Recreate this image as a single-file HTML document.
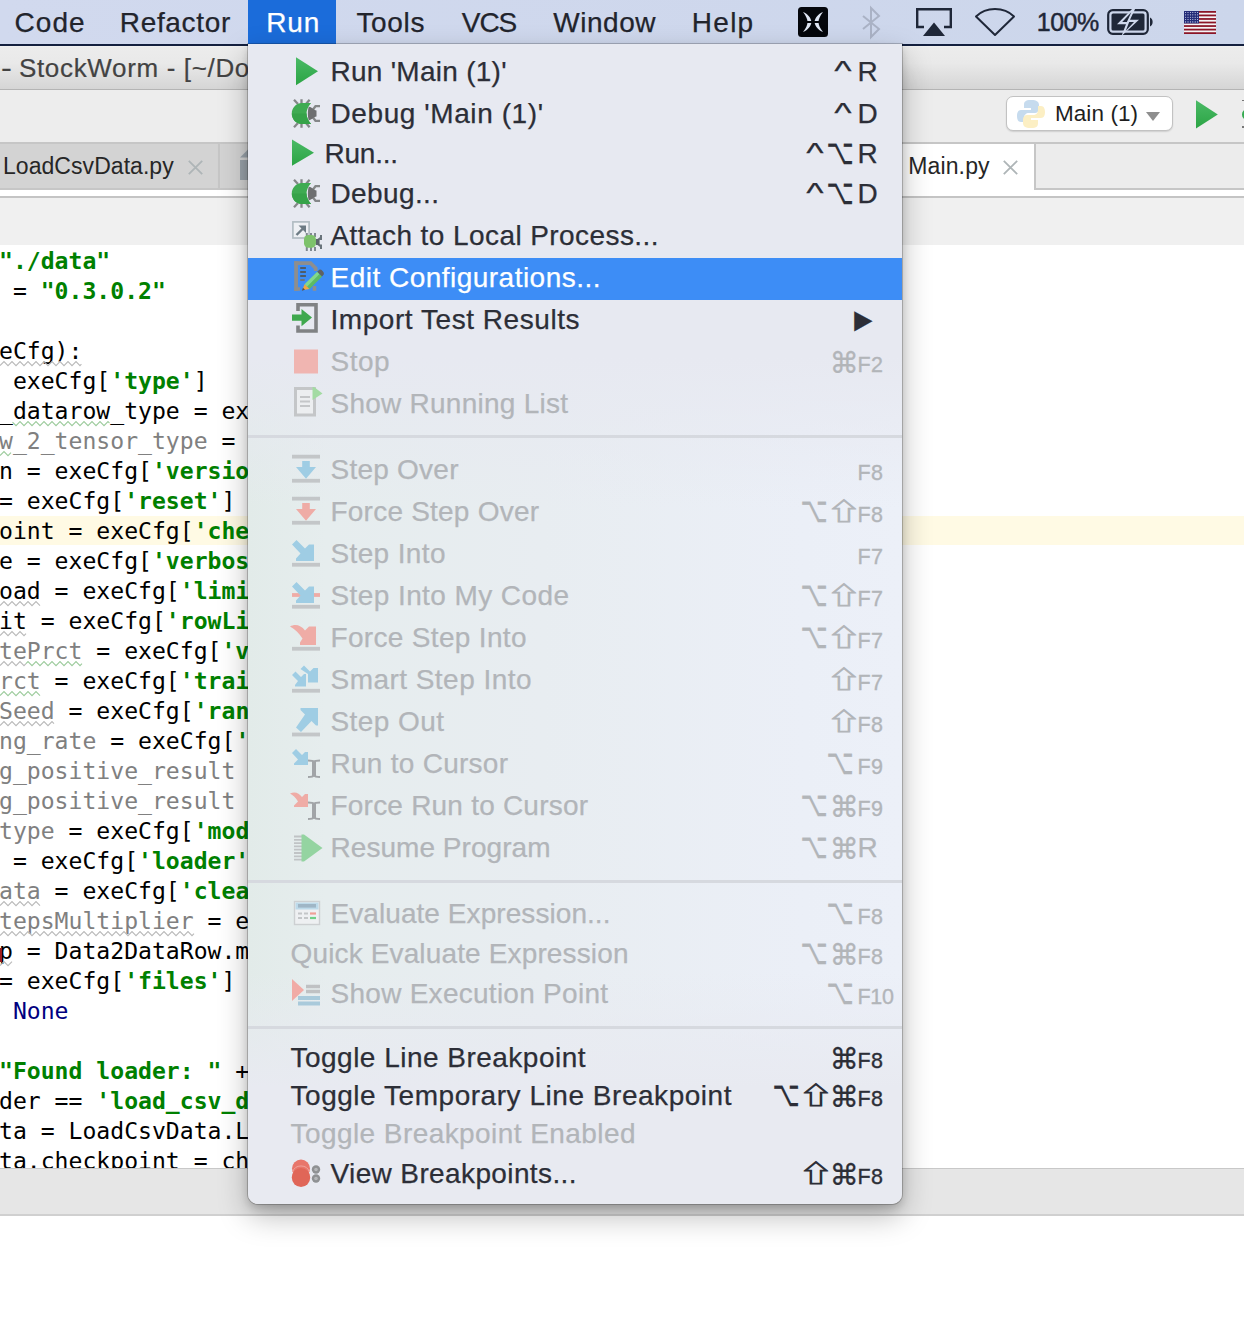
<!DOCTYPE html>
<html><head><meta charset="utf-8"><title>PyCharm Run menu</title>
<style>
html,body{margin:0;padding:0;background:#fff;}
body{width:1244px;height:1324px;position:relative;overflow:hidden;font-family:"Liberation Sans",sans-serif;}
.abs{position:absolute}
#menubar{left:0;top:0;width:1244px;height:44px;background:linear-gradient(90deg,#d1d9ee 0%,#ccd6eb 100%);}
#menubar .t{position:absolute;top:0;height:44px;line-height:45px;margin-left:1px;font-size:28px;color:#22242c;white-space:pre;-webkit-text-stroke:.25px currentColor}
#runhl{position:absolute;left:248px;top:0;width:88px;height:44px;background:#1b6cda}
#mbline{left:0;top:43.8px;width:1244px;height:2.2px;background:#14203f}
#titlebar{left:0;top:46px;width:1244px;height:42.6px;background:linear-gradient(#f4f4f4 0,#ececec 1.2px,#e9e9e9 40%,#d5d5d5 100%);border-bottom:1.3px solid #b4b4b4}
#titlebar span{position:absolute;top:.4px;line-height:45.4px;font-size:26px;color:#434343;white-space:pre;-webkit-text-stroke:.2px currentColor}
#toolbar{left:0;top:89.8px;width:1244px;height:53px;background:#ededed}
#tabbar{left:0;top:141.9px;width:1244px;height:48.1px;background:#ececec;border-top:2px solid #c6c6c6;border-bottom:2px solid #c6c6c6;box-sizing:border-box}
#tabstrip{left:0;top:190px;width:1244px;height:6px;background:#fff}
#crumbs{left:0;top:196px;width:1244px;height:49.6px;background:#f0f0f0;border-top:2px solid #c4c4c4;border-bottom:1.7px solid #c9c9c9;box-sizing:border-box}
#editor{left:0;top:245px;width:1244px;height:923px;background:#fff;overflow:hidden}
#hl{position:absolute;left:0;top:271.3px;width:1244px;height:29px;background:#fffae4}
.cl{position:absolute;left:-1px;height:30px;line-height:30px;font-family:"DejaVu Sans Mono","Liberation Mono",monospace;font-size:23.1px;color:#000;white-space:pre}
.cl b.s{color:#008000;font-weight:bold}
.cl i{font-style:normal}
.cl .g{color:#808080}
.cl .k{color:#000080}
.cl u{text-decoration:none}
#status{left:0;top:1168px;width:1244px;height:48px;background:#e6e6e6;border-top:1px solid #c8c8c8;border-bottom:2px solid #d0d0d0;box-sizing:border-box}
#menu{left:248px;top:44px;width:654px;height:1160px;background:linear-gradient(180deg,rgba(231,233,241,1) 0%,rgba(231,233,241,1) 27%,rgba(231,233,241,0) 40%,rgba(232,234,241,0) 80%,rgba(232,234,241,1) 90%),linear-gradient(90deg,#e2ebe9 0%,#e6edee 12%,#e8edf1 45%,#ebeff7 85%,#ecf0f8 100%);border-radius:0 0 10px 10px;box-shadow:0 0 0 1px rgba(0,0,0,.2),0 12px 30px rgba(0,0,0,.27),0 4px 9px rgba(0,0,0,.16);overflow:hidden}
.mi{position:absolute;left:0;width:654px;height:42px;line-height:42px;font-size:28px;color:#2c2e37;white-space:pre;-webkit-text-stroke:.25px currentColor}
.mi.dis{color:#b2b5b9}
.mi.sel{color:#fff}
.mi.sel::before{content:"";position:absolute;left:0;top:1px;width:100%;height:42px;background:#3d8df6}
.mi .ic{position:absolute;top:5px;height:32px;width:34px}
.mi .ic svg{display:block}
.mi .lb{position:absolute;top:0}
.mi .mods{position:absolute;right:654px;top:0;height:42px;white-space:nowrap;right:calc(654px - 609.5px)}
.mods.shl{margin-right:-2.4px}
.sym{display:inline-block;position:relative;width:28.5px;height:42px;vertical-align:top}
.sym i{position:absolute;left:50%;top:0;height:42px;line-height:42px;font-style:normal;white-space:pre}
.s-cmd{width:25.8px}
.s-cmd i{left:12.25px;font-family:"DejaVu Sans",sans-serif;font-size:29px;transform:translate(-50%,.5px)}
.s-opt{width:28.1px}
.s-opt i{left:10.6px;font-family:"DejaVu Sans",sans-serif;font-size:35.5px;transform:translate(-50%,-2.5px) scaleX(.665)}
.s-shf{width:28.1px}
.s-shf i{left:12.2px;font-family:"Noto Sans CJK JP","DejaVu Sans",sans-serif;font-size:24px;-webkit-text-stroke:.8px currentColor;transform:translate(-50%,-2px) scaleX(1.43)}
.s-ctl{width:28.5px}
.s-ctl i{left:14.25px;font-family:"Liberation Sans",sans-serif;font-size:28px;transform:translate(-50%,-1px) scaleX(1.32)}
.lk{position:absolute;left:609.5px;top:0}
.fk{position:absolute;left:609.5px;top:2.5px;font-size:21.5px;letter-spacing:.4px;-webkit-text-stroke:.35px currentColor}
.arr{position:absolute;left:606.3px;top:0;font-family:"DejaVu Sans",sans-serif;font-size:23.5px;transform:scaleY(1.1);transform-origin:50% 60%}
.sep{position:absolute;left:0;width:654px;height:3px;background:#d6d9df}
.tab{position:absolute;top:-.9px;height:46px;line-height:46px;font-size:23px;color:#262626;white-space:pre}
</style></head><body>
<svg width="0" height="0" style="position:absolute"><defs><linearGradient id="gg" x1="0" y1="0" x2="0" y2="1"><stop offset="0" stop-color="#4aba66"/><stop offset="1" stop-color="#2ba444"/></linearGradient></defs></svg>
<div id="titlebar" class="abs"><span style="left:.5px;transform:scaleX(1.25);transform-origin:0 50%">-</span><span style="left:19.00px;letter-spacing:0.654px">StockWorm - [~/Documents/StockWorm] - .../Main.py - PyCharm</span></div>
<div id="toolbar" class="abs">
  <div class="abs" style="left:1005.6px;top:6.4px;width:167px;height:35.2px;box-sizing:border-box;background:#fff;border:1.2px solid #c2c2c2;border-radius:7px;box-shadow:0 1px 1.5px rgba(0,0,0,.13)"></div>
  <span class="abs" style="left:1016px;top:9.5px"><svg width="30" height="30" viewBox="0 0 30 30" style="overflow:visible" >
<path d="M15 1c-6 0-7 2-7 5v3h7v2H5c-3 0-4 3-4 6s1 6 4 6h3v-4c0-3 2-5 5-5h6c2 0 4-2 4-4V6c0-3-2-5-8-5z" fill="#c6dbee"/>
<path d="M15 29c6 0 7-2 7-5v-3h-7v-2h10c3 0 4-3 4-6s-1-6-4-6h-3v4c0 3-2 5-5 5h-6c-2 0-4 2-4 4v4c0 3 2 5 8 5z" fill="#fcefc4"/>
</svg></span>
  <span class="abs" style="left:1054.90px;letter-spacing:0.096px;top:6.2px;line-height:36.8px;font-size:22.5px;color:#1e1e1e;white-space:pre">Main (1)</span>
  <span class="abs" style="left:1145.8px;top:22px;width:0;height:0;border-left:7.5px solid transparent;border-right:7.5px solid transparent;border-top:9.2px solid #8e8e8e"></span>
  <span class="abs" style="left:1195px;top:9.8px"><svg width="24" height="29" viewBox="0 0 24 29" style="overflow:visible" ><path d="M1 .3 L22.8 14.4 L1 28.600 Z" fill="url(#gg)"/></svg></span>
  <span class="abs" style="left:1241.6px;top:18.8px;width:8px;height:11.400px;border-radius:6px 0 0 6px;background:#35ab50"></span><span class="abs" style="left:1242px;top:10px;width:2px;height:1.600px;background:#777"></span><span class="abs" style="left:1242px;top:36.400px;width:2px;height:1.600px;background:#777"></span>
</div>
<div id="tabbar" class="abs">
  <div class="abs" style="left:0;top:0;width:896px;height:44.1px;background:#d3d3d3"></div>
  <span class="tab" style="left:3.00px;letter-spacing:0.050px">LoadCsvData.py</span>
  <span class="abs" style="left:187.5px;top:16.3px"><svg width="15" height="15" viewBox="0 0 15 15" style="overflow:visible" ><path d="M.8 .8 L14.2 14.2 M14.2 .8 L.8 14.2" stroke="#aeb5b7" stroke-width="1.8" fill="none"/></svg></span>
  <div class="abs" style="left:218.3px;top:0;width:1.5px;height:44.1px;background:#c6c6c6"></div>
  <span class="abs" style="left:240px;top:4.2px"><svg width="12" height="32" viewBox="0 0 12 32" style="overflow:visible" ><path d="M0 9.500 L8 1.500 H12 V9.500 Z" fill="#9ba4ac"/><path d="M0 12 H12 V32 H0 Z" fill="#9ba4ac"/></svg></span>
  <div class="abs" style="left:896px;top:0;width:138px;height:46.1px;background:#fff;border-right:2px solid #c6c6c6"></div><div class="abs" style="left:896px;top:44px;width:138.1px;height:8px;background:#fff"></div>
  <span class="tab" style="left:908.20px;letter-spacing:0.142px">Main.py</span>
  <span class="abs" style="left:1003.3px;top:16.3px"><svg width="15" height="15" viewBox="0 0 15 15" style="overflow:visible" ><path d="M.8 .8 L14.2 14.2 M14.2 .8 L.8 14.2" stroke="#aeb5b7" stroke-width="1.8" fill="none"/></svg></span>
</div>
<div id="tabstrip" class="abs"></div>
<div id="crumbs" class="abs"></div>
<div id="editor" class="abs"><div id="hl"></div>
<div class="cl" style="top:1px"><b class="s">"./data"</b></div>
<div class="cl" style="top:31px"> = <b class="s">"0.3.0.2"</b></div>
<div class="cl" style="top:91px"><u class="w">eCfg):</u></div>
<div class="cl" style="top:121px"> exeCfg[<b class="s">'type'</b>]</div>
<div class="cl" style="top:151px"><u class="w">_datarow</u>_type = ex</div>
<div class="cl" style="top:181px"><u class="w g">w_2_tensor_type</u><i class="g"> </i>= </div>
<div class="cl" style="top:211px">n = exeCfg[<b class="s">'versio</b></div>
<div class="cl" style="top:241px">= exeCfg[<b class="s">'reset'</b>]</div>
<div class="cl" style="top:271px">oint = exeCfg[<b class="s">'che</b></div>
<div class="cl" style="top:301px">e = exeCfg[<b class="s">'verbos</b></div>
<div class="cl" style="top:331px"><u class="w">oad</u> = exeCfg[<b class="s">'limi</b></div>
<div class="cl" style="top:361px"><u class="w">it</u> = exeCfg[<b class="s">'rowLi</b></div>
<div class="cl" style="top:391px"><u class="w g">tePrct</u> = exeCfg[<b class="s">'v</b></div>
<div class="cl" style="top:421px"><u class="w g">rct</u> = exeCfg[<b class="s">'trai</b></div>
<div class="cl" style="top:451px"><u class="w g">Seed</u> = exeCfg[<b class="s">'ran</b></div>
<div class="cl" style="top:481px"><i class="g">ng_rate</i> = exeCfg[<b class="s">'</b></div>
<div class="cl" style="top:511px"><i class="g">g_positive_result</i> </div>
<div class="cl" style="top:541px"><i class="g">g_positive_result</i> </div>
<div class="cl" style="top:571px"><i class="g">type</i> = exeCfg[<b class="s">'mod</b></div>
<div class="cl" style="top:601px"> = exeCfg[<b class="s">'loader'</b></div>
<div class="cl" style="top:631px"><u class="w g">ata</u> = exeCfg[<b class="s">'clea</b></div>
<div class="cl" style="top:661px"><u class="w g">tepsMultiplier</u> = e</div>
<div class="cl" style="top:691px">p = Data2DataRow.m</div>
<div class="cl" style="top:721px">= exeCfg[<b class="s">'files'</b>]</div>
<div class="cl" style="top:751px"> <i class="k">None</i></div>
<div class="cl" style="top:811px"><b class="s">"Found loader: "</b> +</div>
<div class="cl" style="top:841px">der == <b class="s">'load_csv_d</b></div>
<div class="cl" style="top:871px">ta = LoadCsvData.L</div>
<div class="cl" style="top:901px">ta.checkpoint = ch</div>
<svg class="abs" style="left:0;top:0;overflow:visible" width="260" height="923" viewBox="0 0 260 923" fill="none" stroke-width="1.1"><polyline points="0.0,120.6 4.0,116.6 8.0,120.6 12.0,116.6 16.0,120.6 20.0,116.6 24.0,120.6 28.0,116.6 32.0,120.6 36.0,116.6 40.0,120.6 44.0,116.6 48.0,120.6 52.0,116.6 56.0,120.6 60.0,116.6 64.0,120.6 68.0,116.6 72.0,120.6 76.0,116.6 80.0,120.6 81.4,119.2" stroke="#b9b9b9"/><polyline points="12.5,177.1 16.0,180.6 20.0,176.6 24.0,180.6 28.0,176.6 32.0,180.6 36.0,176.6 40.0,180.6 44.0,176.6 48.0,180.6 52.0,176.6 56.0,180.6 60.0,176.6 64.0,180.6 68.0,176.6 72.0,180.6 76.0,176.6 80.0,180.6 84.0,176.6 88.0,180.6 92.0,176.6 96.0,180.6 100.0,176.6 104.0,180.6 108.0,176.6 109.5,178.1" stroke="#9ccb9c"/><polyline points="0.0,210.6 4.0,206.6 8.0,210.6 11.0,207.6" stroke="#9ccb9c"/><polyline points="0.0,360.6 4.0,356.6 8.0,360.6 12.0,356.6 16.0,360.6 20.0,356.6 24.0,360.6 28.0,356.6 32.0,360.6 36.0,356.6 40.0,360.6" stroke="#b9b9b9"/><polyline points="0.0,390.6 4.0,386.6 8.0,390.6 12.0,386.6 16.0,390.6 20.0,386.6 24.0,390.6 26.0,388.6" stroke="#b9b9b9"/><polyline points="0.0,420.6 4.0,416.6 8.0,420.6 12.0,416.6 16.0,420.6 20.0,416.6 24.0,420.6 26.0,418.6" stroke="#b9b9b9"/><polyline points="26.0,418.6 28.0,416.6 32.0,420.6 36.0,416.6 40.0,420.6 44.0,416.6 48.0,420.6 52.0,416.6 56.0,420.6 60.0,416.6 64.0,420.6 68.0,416.6 72.0,420.6 76.0,416.6 80.0,420.6 82.0,418.6" stroke="#9ccb9c"/><polyline points="0.0,450.6 4.0,446.6 8.0,450.6 12.0,446.6 16.0,450.6 20.0,446.6 24.0,450.6 28.0,446.6 32.0,450.6 36.0,446.6 40.0,450.6" stroke="#9ccb9c"/><polyline points="0.0,480.6 4.0,476.6 8.0,480.6 12.0,476.6 16.0,480.6 20.0,476.6 24.0,480.6 28.0,476.6 32.0,480.6 36.0,476.6 40.0,480.6 44.0,476.6 48.0,480.6 52.0,476.6 54.0,478.6" stroke="#b9b9b9"/><polyline points="0.0,660.6 4.0,656.6 8.0,660.6 12.0,656.6 16.0,660.6 20.0,656.6 24.0,660.6 28.0,656.6 32.0,660.6 36.0,656.6 40.0,660.6" stroke="#b9b9b9"/><polyline points="0.0,690.6 4.0,686.6 8.0,690.6 12.0,686.6 16.0,690.6 20.0,686.6 24.0,690.6 28.0,686.6 32.0,690.6 36.0,686.6 40.0,690.6 44.0,686.6 48.0,690.6 52.0,686.6 56.0,690.6 60.0,686.6 64.0,690.6 68.0,686.6 72.0,690.6 76.0,686.6 80.0,690.6 84.0,686.6 88.0,690.6 92.0,686.6 96.0,690.6 100.0,686.6 104.0,690.6 108.0,686.6 112.0,690.6 116.0,686.6 120.0,690.6 124.0,686.6 128.0,690.6 132.0,686.6 136.0,690.6 140.0,686.6 144.0,690.6 148.0,686.6 152.0,690.6 156.0,686.6 160.0,690.6 164.0,686.6 168.0,690.6 172.0,686.6 176.0,690.6 180.0,686.6 184.0,690.6 188.0,686.6 192.0,690.6 194.0,688.6" stroke="#b9b9b9"/><polyline points="0.0,720.6 4.0,716.6 8.0,720.6 12.0,716.6" stroke="#b9b9b9"/></svg>
<div class="abs" style="left:0;top:703px;width:2px;height:14px;background:#9b1c1c"></div>
</div>
<div id="status" class="abs"></div>
<div id="menubar" class="abs">
  <div id="runhl"></div>
  <span class="t" style="left:13.60px;letter-spacing:1.054px">Code</span>
  <span class="t" style="left:118.80px;letter-spacing:0.667px">Refactor</span>
  <span class="t" style="left:265.30px;letter-spacing:0.812px;color:#fff">Run</span>
  <span class="t" style="left:355.40px;letter-spacing:0.656px">Tools</span>
  <span class="t" style="left:460.80px;letter-spacing:-1.089px">VCS</span>
  <span class="t" style="left:552.20px;letter-spacing:0.561px">Window</span>
  <span class="t" style="left:690.80px;letter-spacing:1.269px">Help</span>
  <span class="abs" style="left:798px;top:7px"><svg width="30" height="30" viewBox="0 0 30 30" style="overflow:visible" ><rect x="0" y="0" width="30" height="30" rx="3.5" fill="#05070c"/><path d="M5 5 C10 7 13 11 13.5 15 C13 19 10 23 5 25 C8 21 9.5 18 9.5 15 C9.5 12 8 9 5 5 Z" fill="#dfe6f4"/><path d="M25 5 C20 7 17 11 16.5 15 C17 19 20 23 25 25 C22 21 20.5 18 20.5 15 C20.5 12 22 9 25 5 Z" fill="#dfe6f4"/><path d="M4 15 H26" stroke="#05070c" stroke-width="2"/></svg></span><span class="abs" style="left:860px;top:6px"><svg width="22" height="33" viewBox="0 0 22 33" style="overflow:visible" ><path d="M3 10 L19 23 L11 31 L11 2 L19 10 L3 23" fill="none" stroke="#aab2c5" stroke-width="2" stroke-linejoin="miter"/></svg></span><span class="abs" style="left:915px;top:7px"><svg width="38" height="30" viewBox="0 0 38 30" style="overflow:visible" ><path d="M9 20 H2.2 V2.2 H35.8 V20 H29" fill="none" stroke="#1f2738" stroke-width="2.4"/><path d="M19 15.5 L30 29 H8 Z" fill="#1f2738"/></svg></span><span class="abs" style="left:974px;top:7px"><svg width="42" height="30" viewBox="0 0 42 30" style="overflow:visible" ><path d="M2 9.5 C12 -0.5 30 -0.5 40 9.5 L21 28 Z" fill="none" stroke="#1f2738" stroke-width="2" stroke-linejoin="round"/></svg></span><span class="t" style="left:1035.80px;letter-spacing:-0.518px;font-size:25px;color:#1f2738;-webkit-text-stroke:.45px #1f2738">100%</span><span class="abs" style="left:1107px;top:9px"><svg width="48" height="26" viewBox="0 0 48 26" style="overflow:visible" ><rect x="1.2" y="1.2" width="39.6" height="23.6" rx="4.5" fill="none" stroke="#1f2738" stroke-width="2.2"/><rect x="4.5" y="4.5" width="33" height="17" rx="1.5" fill="#1f2738"/><path d="M43 8.5 C46.5 9.5 46.5 16.5 43 17.5 Z" fill="#1f2738"/><path d="M26 -1 L10 15.3 H19 L14.5 27 L32 10.7 H23 L28.5 -1 Z" fill="#cfd8ec"/><path d="M24.3 3.2 L15.2 13 H22.2 L18.8 21.8 L27 12.9 H19.9 Z" fill="#1f2738"/></svg></span><span class="abs" style="left:1184px;top:10.6px"><svg width="32" height="23" viewBox="0 0 32 23" style="overflow:visible" ><rect width="32" height="23" fill="#f4f4f6"/><rect x="0" y="0.00" width="32" height="1.77" fill="#8b1527"/><rect x="0" y="3.54" width="32" height="1.77" fill="#8b1527"/><rect x="0" y="7.08" width="32" height="1.77" fill="#8b1527"/><rect x="0" y="10.62" width="32" height="1.77" fill="#8b1527"/><rect x="0" y="14.16" width="32" height="1.77" fill="#8b1527"/><rect x="0" y="17.70" width="32" height="1.77" fill="#8b1527"/><rect x="0" y="21.24" width="32" height="1.77" fill="#8b1527"/><rect x="0" y="0" width="15" height="12.4" fill="#232c78"/><circle cx="1.6" cy="1.50" r=".55" fill="#dfe3f5"/><circle cx="4.0" cy="1.50" r=".55" fill="#dfe3f5"/><circle cx="6.4" cy="1.50" r=".55" fill="#dfe3f5"/><circle cx="8.8" cy="1.50" r=".55" fill="#dfe3f5"/><circle cx="11.2" cy="1.50" r=".55" fill="#dfe3f5"/><circle cx="13.6" cy="1.50" r=".55" fill="#dfe3f5"/><circle cx="1.6" cy="3.85" r=".55" fill="#dfe3f5"/><circle cx="4.0" cy="3.85" r=".55" fill="#dfe3f5"/><circle cx="6.4" cy="3.85" r=".55" fill="#dfe3f5"/><circle cx="8.8" cy="3.85" r=".55" fill="#dfe3f5"/><circle cx="11.2" cy="3.85" r=".55" fill="#dfe3f5"/><circle cx="13.6" cy="3.85" r=".55" fill="#dfe3f5"/><circle cx="1.6" cy="6.20" r=".55" fill="#dfe3f5"/><circle cx="4.0" cy="6.20" r=".55" fill="#dfe3f5"/><circle cx="6.4" cy="6.20" r=".55" fill="#dfe3f5"/><circle cx="8.8" cy="6.20" r=".55" fill="#dfe3f5"/><circle cx="11.2" cy="6.20" r=".55" fill="#dfe3f5"/><circle cx="13.6" cy="6.20" r=".55" fill="#dfe3f5"/><circle cx="1.6" cy="8.55" r=".55" fill="#dfe3f5"/><circle cx="4.0" cy="8.55" r=".55" fill="#dfe3f5"/><circle cx="6.4" cy="8.55" r=".55" fill="#dfe3f5"/><circle cx="8.8" cy="8.55" r=".55" fill="#dfe3f5"/><circle cx="11.2" cy="8.55" r=".55" fill="#dfe3f5"/><circle cx="13.6" cy="8.55" r=".55" fill="#dfe3f5"/><circle cx="1.6" cy="10.90" r=".55" fill="#dfe3f5"/><circle cx="4.0" cy="10.90" r=".55" fill="#dfe3f5"/><circle cx="6.4" cy="10.90" r=".55" fill="#dfe3f5"/><circle cx="8.8" cy="10.90" r=".55" fill="#dfe3f5"/><circle cx="11.2" cy="10.90" r=".55" fill="#dfe3f5"/><circle cx="13.6" cy="10.90" r=".55" fill="#dfe3f5"/></svg></span>
</div>
<div id="mbline" class="abs"></div>
<div id="menu" class="abs">
<div class="mi" style="top:7px"><span class="ic" style="left:42px"><svg width="32" height="32" viewBox="0 0 32 32" style="overflow:visible" ><path d="M6 1.3 L28 15.3 L6 29.3 Z" fill="url(#gg)"/></svg></span><span class="lb" style="left:82.5px;letter-spacing:0.267px">Run &#x27;Main (1)&#x27;</span><span class="mods"><span class="sym s-ctl"><i>^</i></span></span><span class="lk">R</span></div>
<div class="mi" style="top:49px"><span class="ic" style="left:42px"><svg width="32" height="32" viewBox="0 0 32 32" style="overflow:visible" >
<g stroke="#858789" stroke-width="2.3" fill="none">
<path d="M4 1.8 L8 6"/><path d="M11.5 1.2 V6"/><path d="M19.6 1.8 L16 6"/>
<path d="M4 29.2 L8 25"/><path d="M11.5 29.8 V25"/><path d="M19.6 29.2 L16 25"/>
<path d="M30 8.200 H25.500 L23 11.500"/><path d="M30 22.800 H25.500 L23 19.500"/>
</g>
<path d="M18.800 8.800 C22 9 23.500 12 26.500 12.500 V18.500 C23.500 19 22 22 18.800 22.200 C17.600 19 17.600 12 18.800 8.800 Z" fill="#6e6f71"/>
<path d="M21.200 5 C17.500 9 16.600 13 16.600 15.500 C16.600 18 17.500 22 21.200 26 L12 26 C5.500 26 1.800 20.500 1.800 15.500 C1.800 10.500 5.500 5 12 5 Z" fill="#3fab52"/>
<path d="M1.800 15.500 H16.600 C16.600 18 17.500 22 21.200 26 L12 26 C5.500 26 1.800 20.500 1.800 15.500 Z" fill="#36a349"/>
</svg></span><span class="lb" style="left:82.5px;letter-spacing:0.589px">Debug &#x27;Main (1)&#x27;</span><span class="mods"><span class="sym s-ctl"><i>^</i></span></span><span class="lk">D</span></div>
<div class="mi" style="top:89px"><span class="ic" style="left:42px"><svg width="32" height="32" viewBox="0 0 32 32" style="overflow:visible" ><path d="M2 1.6 L24 14.7 L2 27.8 Z" fill="url(#gg)"/></svg></span><span class="lb" style="left:76.5px;letter-spacing:-0.241px">Run...</span><span class="mods"><span class="sym s-ctl"><i>^</i></span><span class="sym s-opt"><i>⌥</i></span></span><span class="lk">R</span></div>
<div class="mi" style="top:129px"><span class="ic" style="left:42px"><svg width="32" height="32" viewBox="0 0 32 32" style="overflow:visible" >
<g stroke="#858789" stroke-width="2.3" fill="none">
<path d="M4 1.8 L8 6"/><path d="M11.5 1.2 V6"/><path d="M19.6 1.8 L16 6"/>
<path d="M4 29.2 L8 25"/><path d="M11.5 29.8 V25"/><path d="M19.6 29.2 L16 25"/>
<path d="M30 8.200 H25.500 L23 11.500"/><path d="M30 22.800 H25.500 L23 19.500"/>
</g>
<path d="M18.800 8.800 C22 9 23.500 12 26.500 12.500 V18.500 C23.500 19 22 22 18.800 22.200 C17.600 19 17.600 12 18.800 8.800 Z" fill="#6e6f71"/>
<path d="M21.200 5 C17.500 9 16.600 13 16.600 15.500 C16.600 18 17.500 22 21.200 26 L12 26 C5.500 26 1.800 20.500 1.800 15.500 C1.800 10.500 5.500 5 12 5 Z" fill="#3fab52"/>
<path d="M1.800 15.500 H16.600 C16.600 18 17.500 22 21.200 26 L12 26 C5.500 26 1.800 20.500 1.800 15.500 Z" fill="#36a349"/>
</svg></span><span class="lb" style="left:82.5px;letter-spacing:0.377px">Debug...</span><span class="mods"><span class="sym s-ctl"><i>^</i></span><span class="sym s-opt"><i>⌥</i></span></span><span class="lk">D</span></div>
<div class="mi" style="top:171px"><span class="ic" style="left:42px"><svg width="34" height="32" viewBox="0 0 34 32" style="overflow:visible" >
<rect x="2.900" y="1.900" width="16.200" height="16.100" fill="#eef0f4" stroke="#b2bdc3" stroke-width="1.700"/>
<path d="M6.500 15 L13.500 8" stroke="#6d7b84" stroke-width="2.400" fill="none"/><path d="M8.500 5.500 H16 V13 Z" fill="#6d7b84"/>
<g stroke="#7f8890" stroke-width="2"><path d="M16.800 13v4M21 13v4M25 13v4M16.800 27v4M21 27v4M25 27v4"/><path d="M31 15v5M31 24.500v4.500" stroke="#69737a"/><path d="M27 20.500 L31 17.500 M27 23.500 L31 26.500" stroke="#69737a" stroke-width="1.800"/></g>
<rect x="26" y="19" width="3.600" height="6" fill="#5c666c"/>
<rect x="14" y="15" width="12" height="12.700" rx="4.500" fill="#7dc26b"/>
</svg></span><span class="lb" style="left:82.5px;letter-spacing:0.420px">Attach to Local Process...</span></div>
<div class="mi sel" style="top:213px"><span class="ic" style="left:42px"><svg width="34" height="32" viewBox="0 0 34 32" style="overflow:visible" >
<path d="M6.100 -0.800 V28.800" stroke="#8e8e8e" stroke-width="3.800"/>
<path d="M4.200 1.050 H20.500 L25.700 6.300 V9" fill="none" stroke="#8e8e8e" stroke-width="3.700" stroke-linejoin="miter"/>
<path d="M4.200 27.050 H10 M23 27.050 H26 M24.500 28.800 V24" stroke="#8e8e8e" stroke-width="3.500" fill="none"/>
<path d="M10.200 6h5.700M10.200 10h5.700M10.200 14h5.700" stroke="#4f5b68" stroke-width="2"/><path d="M10.200 18h4.500" stroke="#6a7683" stroke-width="2"/>
<path d="M14.500 24.500 L27 12 L31.800 16.800 L19.300 29.300 Z" fill="#5dbb63" transform="translate(.3,-2.200)"/>
<path d="M14.500 22.300 L27.300 9.800 L29.500 12 L17 24.800 Z" fill="#8fe29a" opacity=".75"/>
<path d="M27.200 9.700 L29.300 7.700 Q30.800 7.200 32.600 9 T33.900 12.300 L32 14.500 Z" fill="#5f6163"/>
<path d="M12.200 28.300 L14.600 22.200 L19.500 27.100 Z" fill="#f4a83c"/><path d="M11.800 28.800 L13 25.800 L15 27.800 Z" fill="#4e4e50"/>
</svg></span><span class="lb" style="left:82.5px;letter-spacing:0.480px">Edit Configurations...</span></div>
<div class="mi" style="top:255px"><span class="ic" style="left:42px"><svg width="34" height="32" viewBox="0 0 34 32" style="overflow:visible" >
<path d="M8 7 V0.800 H26 V27 H8 V21.500" fill="none" stroke="#808284" stroke-width="3.600"/>
<path d="M2 10.5 H11.5 V5 L22 13.6 L11.5 22.2 V16.7 H2 Z" fill="#3fa84e"/>
</svg></span><span class="lb" style="left:82.5px;letter-spacing:0.549px">Import Test Results</span><span class="arr">▶</span></div>
<div class="mi dis" style="top:297px"><span class="ic" style="left:42px"><svg width="34" height="32" viewBox="0 0 34 32" style="overflow:visible" ><rect x="4" y="3.500" width="24" height="24" fill="#f0b5b1"/></svg></span><span class="lb" style="left:82.5px;letter-spacing:0.464px">Stop</span><span class="mods"><span class="sym s-cmd"><i>⌘</i></span></span><span class="fk">F2</span></div>
<div class="mi dis" style="top:339px"><span class="ic" style="left:42px"><svg width="34" height="32" viewBox="0 0 34 32" style="overflow:visible" >
<path d="M5.5 0.5 H24.5 V27 H5.5 Z" fill="#eceef0" stroke="#c4c6c8" stroke-width="3"/>
<path d="M10 9h10M10 13.5h10M10 18h10" stroke="#c4c6c8" stroke-width="2"/>
<path d="M22.5 -1 H24 L32.5 5.5 L22.5 12 Z" fill="#a3dba3"/>
</svg></span><span class="lb" style="left:82.5px;letter-spacing:0.251px">Show Running List</span></div>
<div class="sep" style="top:391px"></div>
<div class="mi dis" style="top:405px"><span class="ic" style="left:42px"><svg width="34" height="32" viewBox="0 0 34 32" style="overflow:visible" ><path d="M2 2.65h28" stroke="#c3c6c8" stroke-width="3.8"/><path d="M12.2 7h7.6v6h6.2L16 24.8 6 13h6.2z" fill="#9fcde4"/><path d="M2 26.75h28" stroke="#c3c6c8" stroke-width="3.8"/></svg></span><span class="lb" style="left:82.5px;letter-spacing:0.242px">Step Over</span><span class="fk">F8</span></div>
<div class="mi dis" style="top:447px"><span class="ic" style="left:42px"><svg width="34" height="32" viewBox="0 0 34 32" style="overflow:visible" ><path d="M2 2.65h28" stroke="#c3c6c8" stroke-width="3.8"/><path d="M12.2 7h7.6v6h6.2L16 24.8 6 13h6.2z" fill="#efaca6"/><path d="M2 26.75h28" stroke="#c3c6c8" stroke-width="3.8"/></svg></span><span class="lb" style="left:82.5px;letter-spacing:0.221px">Force Step Over</span><span class="mods shl"><span class="sym s-opt"><i>⌥</i></span><span class="sym s-shf"><i>⇧</i></span></span><span class="fk">F8</span></div>
<div class="mi dis" style="top:489px"><span class="ic" style="left:42px"><svg width="34" height="32" viewBox="0 0 34 32" style="overflow:visible" ><path d="M2 6.5 L6.5 2 L15 10.5 L19 6.5 H24 V23 H6 V20.5 L10.5 15.5 Z" fill="#9fcde4"/><path d="M2 26.75h28" stroke="#c3c6c8" stroke-width="3.8"/></svg></span><span class="lb" style="left:82.5px;letter-spacing:0.363px">Step Into</span><span class="fk">F7</span></div>
<div class="mi dis" style="top:531px"><span class="ic" style="left:42px"><svg width="34" height="32" viewBox="0 0 34 32" style="overflow:visible" ><path d="M2 15h28" stroke="#efaca6" stroke-width="3.8"/><path d="M2 6.5 L6.5 2 L15 10.5 L19 6.5 H24 V23 H6 V20.5 L10.5 15.5 Z" fill="#9fcde4"/><path d="M2 26.75h28" stroke="#c3c6c8" stroke-width="3.8"/></svg></span><span class="lb" style="left:82.5px;letter-spacing:0.412px">Step Into My Code</span><span class="mods shl"><span class="sym s-opt"><i>⌥</i></span><span class="sym s-shf"><i>⇧</i></span></span><span class="fk">F7</span></div>
<div class="mi dis" style="top:573px"><span class="ic" style="left:42px"><svg width="34" height="32" viewBox="0 0 34 32" style="overflow:visible" ><path d="M0 4.5 C5 1.5 11 3 15 8.5 L19 4.5 H26 V23 H10 V20.5 L12.5 16.5 C9 11 5 7 0 4.5 Z" fill="#efaca6"/><path d="M2 26.75h28" stroke="#c3c6c8" stroke-width="3.8"/></svg></span><span class="lb" style="left:82.5px;letter-spacing:0.326px">Force Step Into</span><span class="mods shl"><span class="sym s-opt"><i>⌥</i></span><span class="sym s-shf"><i>⇧</i></span></span><span class="fk">F7</span></div>
<div class="mi dis" style="top:615px"><span class="ic" style="left:42px"><svg width="34" height="32" viewBox="0 0 34 32" style="overflow:visible" ><path d="M2 11 L5.5 7.5 L11 13 L14 10 H16 V22.5 H5 V21 L8 17 Z" fill="#9fcde4"/><path d="M10.5 5 L14 1.5 L20 7.5 L23.5 4 H28 V18.5 H18 V10 Z" fill="#9fcde4"/><path d="M2 26.75h28" stroke="#c3c6c8" stroke-width="3.8"/></svg></span><span class="lb" style="left:82.5px;letter-spacing:0.461px">Smart Step Into</span><span class="mods shl"><span class="sym s-shf"><i>⇧</i></span></span><span class="fk">F7</span></div>
<div class="mi dis" style="top:657px"><span class="ic" style="left:42px"><svg width="34" height="32" viewBox="0 0 34 32" style="overflow:visible" ><path d="M6 21.500 L11 26 L21.500 15 L26 19.500 H28 V2 H10.500 V4 L15 8.500 Z" fill="#9fcde4"/><path d="M2 28.500h28" stroke="#c3c6c8" stroke-width="3.800"/></svg></span><span class="lb" style="left:82.5px;letter-spacing:0.426px">Step Out</span><span class="mods shl"><span class="sym s-shf"><i>⇧</i></span></span><span class="fk">F8</span></div>
<div class="mi dis" style="top:699px"><span class="ic" style="left:42px"><svg width="34" height="32" viewBox="0 0 34 32" style="overflow:visible" ><path d="M2 5 L6 1 L12 7 L15 4 H18 V17 H4 V15.500 L8 11.500 Z" fill="#9fcde4"/><path d="M18 12.500 Q23 12.500 24 14 Q25 12.500 30 12.500 M24 14 V27.500 M18 29 Q23 29 24 27.500 Q25 29 30 29" stroke="#a1a4a7" stroke-width="2.200" fill="none"/><path d="M22 13 h4 v15 h-4z" fill="#a1a4a7"/></svg></span><span class="lb" style="left:82.5px;letter-spacing:0.267px">Run to Cursor</span><span class="mods"><span class="sym s-opt"><i>⌥</i></span></span><span class="fk">F9</span></div>
<div class="mi dis" style="top:741px"><span class="ic" style="left:42px"><svg width="34" height="32" viewBox="0 0 34 32" style="overflow:visible" ><path d="M0 3.500 C5 1 9 3 12 7 L15 4 H18 V17 H4 V15.500 L8 11.500 C6 8 3 5 0 3.500 Z" fill="#efaca6"/><path d="M18 12.500 Q23 12.500 24 14 Q25 12.500 30 12.500 M18 29 Q23 29 24 27.500 Q25 29 30 29" stroke="#a1a4a7" stroke-width="2.200" fill="none"/><path d="M22 13 h4 v15 h-4z" fill="#a1a4a7"/></svg></span><span class="lb" style="left:82.5px;letter-spacing:0.214px">Force Run to Cursor</span><span class="mods"><span class="sym s-opt"><i>⌥</i></span><span class="sym s-cmd"><i>⌘</i></span></span><span class="fk">F9</span></div>
<div class="mi dis" style="top:783px"><span class="ic" style="left:42px"><svg width="34" height="32" viewBox="0 0 34 32" style="overflow:visible" ><path d="M4 4.500h8M4 7.800h8M4 11.100h8M4 14.400h8M4 17.700h8M4 21h8M4 24.300h8M4 27.600h8" stroke="#c0c3c5" stroke-width="1.800"/><path d="M11.500 2.500 H14 L32.500 16 L14 29.500 H11.500 Z" fill="#94d4a1"/></svg></span><span class="lb" style="left:82.5px;letter-spacing:0.046px">Resume Program</span><span class="mods"><span class="sym s-opt"><i>⌥</i></span><span class="sym s-cmd"><i>⌘</i></span></span><span class="lk">R</span></div>
<div class="sep" style="top:836px"></div>
<div class="mi dis" style="top:849px"><span class="ic" style="left:42px"><svg width="34" height="32" viewBox="0 0 34 32" style="overflow:visible" ><rect x="4.500" y="3.500" width="25" height="23" fill="#eef0f2" stroke="#cdd0d2" stroke-width="1.400"/><rect x="5.500" y="4.500" width="23" height="7" fill="#bddaea"/><rect x="8" y="6" width="18" height="3.600" fill="#9fb6c6"/><path d="M8 15.500h4M14 15.500h4" stroke="#c3c6c8" stroke-width="2"/><path d="M20 15.500h6" stroke="#eea097" stroke-width="2.200"/><path d="M8 20h4M14 20h4" stroke="#c3c6c8" stroke-width="2"/><path d="M20 20h6" stroke="#6fd087" stroke-width="2.200"/></svg></span><span class="lb" style="left:82.5px;letter-spacing:0.067px">Evaluate Expression...</span><span class="mods"><span class="sym s-opt"><i>⌥</i></span></span><span class="fk">F8</span></div>
<div class="mi dis" style="top:889px"><span class="lb" style="left:42.5px;letter-spacing:0.141px">Quick Evaluate Expression</span><span class="mods"><span class="sym s-opt"><i>⌥</i></span><span class="sym s-cmd"><i>⌘</i></span></span><span class="fk">F8</span></div>
<div class="mi dis" style="top:929px"><span class="ic" style="left:42px"><svg width="34" height="32" viewBox="0 0 34 32" style="overflow:visible" ><path d="M2 1 L14 12 L2 23 Z" fill="#f1aba6"/><path d="M16 8.500h14M16 13.500h14" stroke="#bfc1c3" stroke-width="3.600"/><path d="M8 20h22M8 25.500h22" stroke="#a9cadb" stroke-width="3.800"/></svg></span><span class="lb" style="left:82.5px;letter-spacing:0.269px">Show Execution Point</span><span class="mods"><span class="sym s-opt"><i>⌥</i></span></span><span class="fk" style=letter-spacing:-.3px>F10</span></div>
<div class="sep" style="top:982px"></div>
<div class="mi" style="top:993px"><span class="lb" style="left:42.5px;letter-spacing:0.482px">Toggle Line Breakpoint</span><span class="mods"><span class="sym s-cmd"><i>⌘</i></span></span><span class="fk">F8</span></div>
<div class="mi" style="top:1031px"><span class="lb" style="left:42.5px;letter-spacing:0.535px">Toggle Temporary Line Breakpoint</span><span class="mods"><span class="sym s-opt"><i>⌥</i></span><span class="sym s-shf"><i>⇧</i></span><span class="sym s-cmd"><i>⌘</i></span></span><span class="fk">F8</span></div>
<div class="mi dis" style="top:1069px"><span class="lb" style="left:42.5px;letter-spacing:0.430px">Toggle Breakpoint Enabled</span></div>
<div class="mi" style="top:1109px"><span class="ic" style="left:42px"><svg width="34" height="32" viewBox="0 0 34 32" style="overflow:visible" ><circle cx="11" cy="10.500" r="9" fill="#e8766b"/><ellipse cx="11" cy="19.500" rx="9.200" ry="9.500" fill="#e06658"/><path d="M2.500 14 A9 9 0 0 1 19.500 14" fill="none" stroke="#f0a29a" stroke-width="1"/><circle cx="26" cy="11.500" r="4.200" fill="#8f9193"/><circle cx="26" cy="11.500" r="1.800" fill="#b5b7b9"/><circle cx="26" cy="20.500" r="4.200" fill="#8f9193"/><circle cx="26" cy="20.500" r="1.800" fill="#b5b7b9"/></svg></span><span class="lb" style="left:82.5px;letter-spacing:0.379px">View Breakpoints...</span><span class="mods"><span class="sym s-shf"><i>⇧</i></span><span class="sym s-cmd"><i>⌘</i></span></span><span class="fk">F8</span></div>
</div>
</body></html>
